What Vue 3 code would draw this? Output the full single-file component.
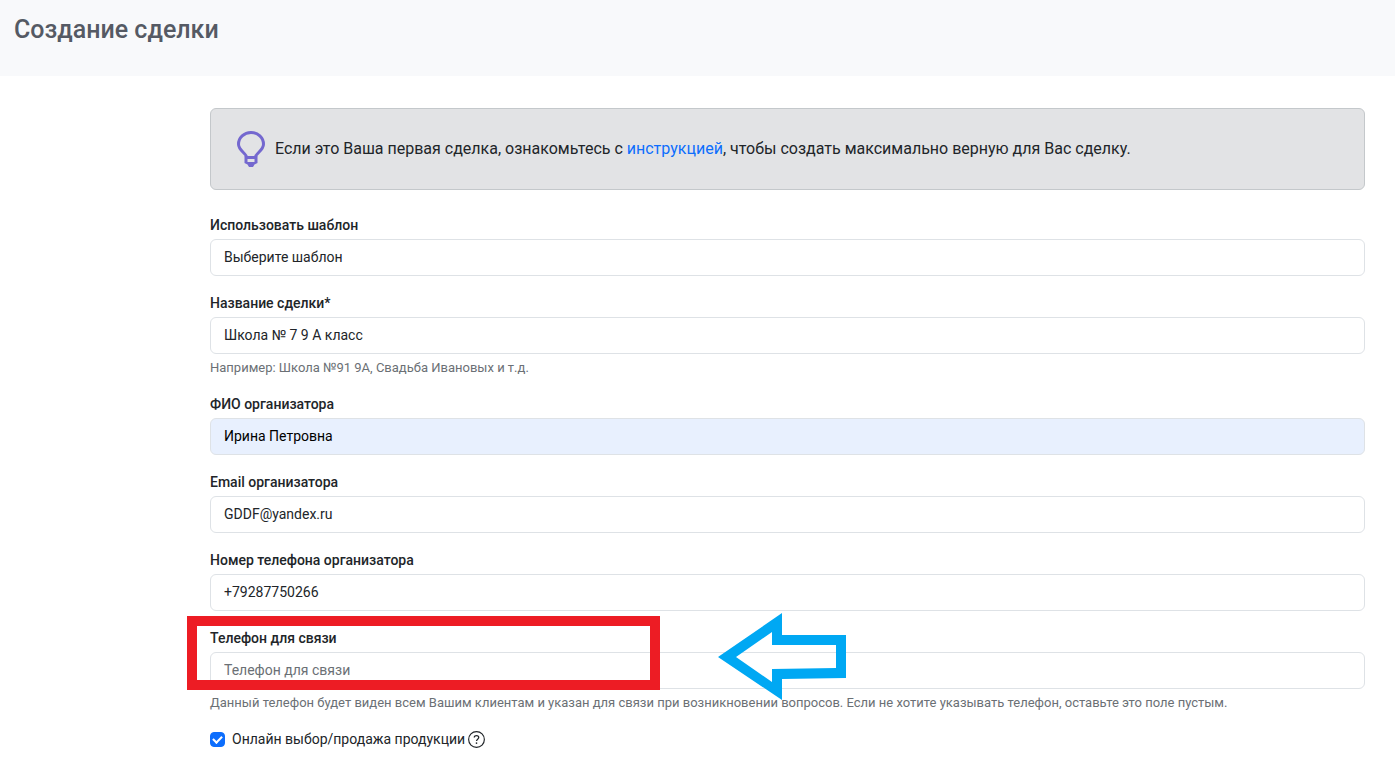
<script setup>
import { ref } from 'vue'

const template = ref('')
const online = ref(true)
const fields = ref([
  { id: 'deal-name', label: 'Название сделки*', type: 'text', value: 'Школа № 7 9 А класс', help: 'Например: Школа №91 9А, Свадьба Ивановых и т.д.' },
  { id: 'organizer', label: 'ФИО организатора', type: 'text', value: 'Ирина Петровна', filled: true },
  { id: 'email', label: 'Email организатора', type: 'email', value: 'GDDF@yandex.ru' },
  { id: 'phone', label: 'Номер телефона организатора', type: 'tel', value: '+79287750266' },
  {
    id: 'contact-phone',
    label: 'Телефон для связи',
    type: 'tel',
    value: '',
    placeholder: 'Телефон для связи',
    marked: true,
    help: 'Данный телефон будет виден всем Вашим клиентам и указан для связи при возникновении вопросов. Если не хотите указывать телефон, оставьте это поле пустым.',
  },
])
</script>

<template>
  <div class="page">
    <header class="header">
      <h1>Создание сделки</h1>
    </header>
    <main class="content">
      <div class="alert">
        <svg class="bulb" viewBox="0 0 28 36" aria-hidden="true">
          <path d="M9.500 26C9.500 22.500 1.500 19.500 1.500 13.300a12.500 11.800 0 0 1 25 0C26.500 19.500 18.500 22.500 18.500 26" fill="none" stroke="#7468cf" stroke-width="3" />
          <path d="M7.500 25h13v7l-3 1.500L16 36h-4l-1.500-2.500-3-1.500Z" fill="#7468cf" />
          <path d="M10.500 28h7v3h-7Z" fill="#e2e3e5" />
        </svg>
        <p>Если это Ваша первая сделка, ознакомьтесь с <a href="#">инструкцией</a>, чтобы создать максимально верную для Вас сделку.</p>
      </div>
      <form @submit.prevent>
        <div class="field">
          <label for="template">Использовать шаблон</label>
          <select id="template" v-model="template" class="control">
            <option value="">Выберите шаблон</option>
          </select>
        </div>
        <div v-for="f in fields" :key="f.id" class="field">
          <label :for="f.id">{{ f.label }}</label>
          <input :id="f.id" v-model="f.value" :type="f.type" :placeholder="f.placeholder" class="control" :class="{ filled: f.filled }" />
          <p v-if="f.help" class="help">{{ f.help }}</p>
          <template v-if="f.marked">
            <div class="frame"></div>
            <svg class="arrow" viewBox="0 0 128 87" aria-hidden="true">
              <path fill="#00a8f3" fill-rule="evenodd" d="M0 44 64 0V22H128V65L64 66V87ZM18 44 54 69V56L118 55V32H54V19Z" />
            </svg>
          </template>
        </div>
        <div class="check">
          <input id="online" v-model="online" type="checkbox" />
          <label for="online">Онлайн выбор/продажа продукции</label>
          <button type="button" class="hint" aria-label="Подсказка">
            <svg viewBox="0 0 16 16" aria-hidden="true">
              <circle cx="8" cy="8" r="7.400" fill="none" stroke="#212529" stroke-width="1.100" />
              <path d="M5.900 6.200C5.900 3.700 10.100 3.700 10.100 6.200C10.100 7.800 8 7.700 8 9.500" fill="none" stroke="#212529" stroke-width="1.200" />
              <circle cx="8" cy="11.400" r=".8" fill="#212529" />
            </svg>
          </button>
        </div>
      </form>
    </main>
  </div>
</template>

<style>
body {
  margin: 0;
  background: #fff;
}
</style>

<style scoped>
.page {
  font-family: Roboto, "Liberation Sans", sans-serif;
  font-size: 14px;
  line-height: 21px;
  color: #212529;
}
.page *,
.page {
  box-sizing: border-box;
}
.header {
  padding: 16px 14px 32px;
  background: #f8f9fb;
}
h1 {
  margin: 0;
  font-size: 25px;
  line-height: 28px;
  font-weight: 500;
  color: #555a64;
}
.content {
  padding: 32px 30px 20px 210px;
}
.alert {
  display: flex;
  align-items: center;
  gap: 10px;
  min-height: 82px;
  margin-bottom: 25px;
  padding: 16px 26px;
  border: 1px solid #c4c8cb;
  border-radius: 6px;
  background: #e2e3e5;
  font-size: 16px;
  line-height: 24px;
}
.bulb {
  width: 28px;
  height: 36px;
  flex: none;
}
.alert p {
  margin: 0;
}
.alert a {
  color: #0d6efd;
  text-decoration: none;
}
.field {
  position: relative;
  display: flex;
  flex-direction: column;
  margin-bottom: 17px;
}
.field label {
  margin-bottom: 3px;
  font-weight: 500;
}
.control {
  width: 100%;
  height: 37px;
  margin: 0;
  padding: 0 13px;
  border: 1px solid #dee2e6;
  border-radius: 6px;
  background: #fff;
  color: #212529;
  font: inherit;
  appearance: none;
}
input.control {
  padding-bottom: 2px;
}
.control::placeholder {
  color: #6b7075;
  opacity: 1;
}
.control.filled {
  background: #e8f0fe;
  color: #000;
}
.help {
  margin: 5px 0 0;
  font-size: 13px;
  line-height: 18px;
  color: #6b7075;
}
.frame {
  position: absolute;
  top: -12px;
  left: -23px;
  width: 473px;
  height: 74px;
  border: 10px solid #ed1c24;
}
.arrow {
  position: absolute;
  top: -15px;
  left: 508px;
  width: 128px;
  height: 87px;
}
.check {
  display: flex;
  align-items: center;
}
.check input {
  display: grid;
  place-items: center;
  width: 15px;
  height: 15px;
  margin: 0 7px 0 0;
  border-radius: 4px;
  border: 1px solid #dee2e6;
  appearance: none;
}
.check input:checked {
  border-color: #0d6efd;
  background: #0d6efd;
}
.check input:checked::after {
  content: "";
  width: 7px;
  height: 4px;
  border: solid #fff;
  border-width: 0 0 2px 2px;
  transform: rotate(-45deg) translate(1px, -1px);
}
.hint {
  display: flex;
  margin: 0 0 0 3px;
  padding: 0;
  border: 0;
  background: none;
}
.hint svg {
  width: 17px;
  height: 17px;
}
</style>
